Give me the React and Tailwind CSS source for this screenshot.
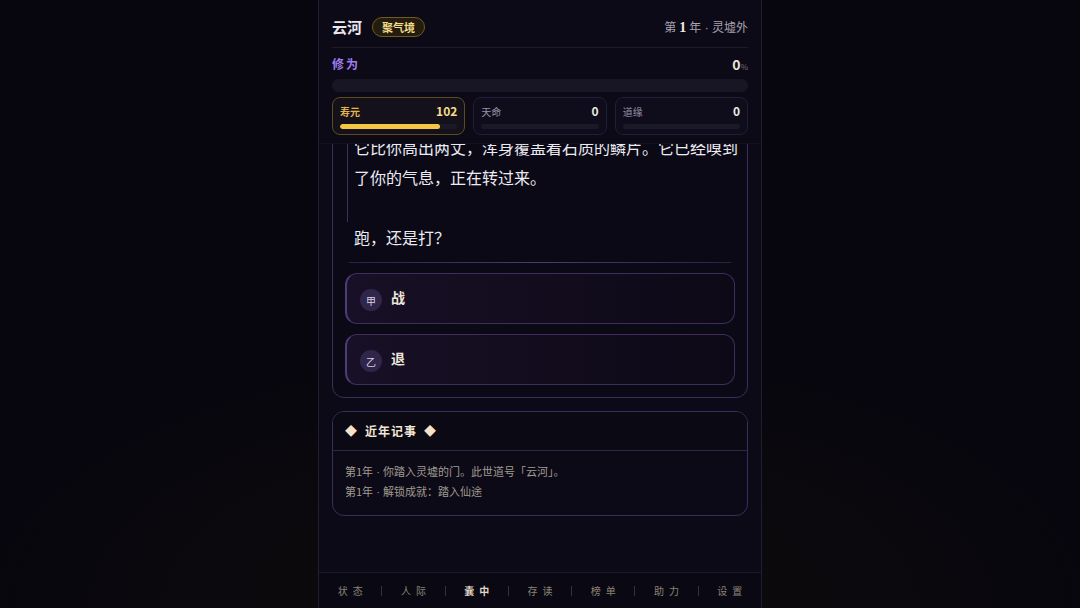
import React from 'react';

const font = { fontFamily: '"Noto Sans CJK SC", "Noto Sans", sans-serif' };
const latin = { fontFamily: '"Liberation Sans", sans-serif' };

function Dot() {
  return <span style={latin}> · </span>;
}

function StatCard({ label, value, pct, gold }) {
  return (
    <div
      className={
        'flex-1 h-[38px] rounded-lg border px-[7px] pt-[5px] ' +
        (gold ? 'border-[#5e4b1e] bg-[#15111a]' : 'border-[#221e36] bg-[#0f0d1c]')
      }
    >
      <div className="flex items-center justify-between h-[16px]">
        <span className={'text-[10px] ' + (gold ? 'text-[#e3b64a] font-bold' : 'text-[#9892a6]')}>{label}</span>
        <span className={'text-[12px] font-bold ' + (gold ? 'text-[#f6dc8e]' : 'text-[#ece8e0]')}>{value}</span>
      </div>
      <div className="mt-[5px] h-[5px] rounded-full bg-[#1b1828] overflow-hidden">
        <div className="h-full rounded-full bg-[#f4c645]" style={{ width: pct + '%' }} />
      </div>
    </div>
  );
}

function Choice({ mark, text }) {
  return (
    <div className="flex items-start gap-[9px] h-[51px] rounded-xl border border-[#3c2f5c] border-l-2 border-l-[#4e3b78] bg-gradient-to-r from-[#181026] to-[#0d0916] pl-[13px] pt-[13px]">
      <span className="mt-[2px] w-[22px] h-[22px] rounded-full bg-[#30264a] text-[#d8cfe8] text-[10px] flex items-center justify-center">
        {mark}
      </span>
      <span className="text-[14px] leading-[21px] font-bold text-[#ece6da]">{text}</span>
    </div>
  );
}

const tabs = ['状态', '人际', '囊中', '存读', '榜单', '助力', '设置'];

export default function App() {
  return (
    <div
      className="w-full h-screen bg-[#07060e] bg-[radial-gradient(ellipse_55%_45%_at_50%_100%,#0f0c0b,transparent)] flex justify-center overflow-hidden"
      style={font}
    >
      <div className="w-[444px] h-full flex flex-col bg-[#0c0a16] border-x border-[#211e2e]">
        {/* header */}
        <header className="h-[144px] px-[13px] pt-[12px] bg-[#0c0a16] relative z-10 border-b border-[#14111e]">
          <div className="flex items-center justify-between h-[30px]">
            <div className="flex items-center gap-[10px]">
              <span className="text-[15px] font-bold text-[#ebe7f0]">云河</span>
              <span className="h-[20px] px-[9px] rounded-full border border-[#6e5a24] bg-[#241c0c] text-[11px] font-bold text-[#f3dc8e] flex items-center">
                聚气境
              </span>
            </div>
            <div className="text-[12px] text-[#a7a2b2] flex items-baseline gap-[3px]">
              <span>第</span>
              <span className="text-[14px] font-bold text-[#f0ece4]" style={{ fontFamily: '"Liberation Serif", serif' }}>1</span>
              <span>
                年<Dot />灵墟外
              </span>
            </div>
          </div>
          <div className="mt-[5px] h-px bg-[#1d1a29]" />
          <div className="mt-[7px] flex items-center justify-between h-[18px]">
            <span className="text-[12px] font-bold tracking-[2px] text-[#a07cf0]">修为</span>
            <span className="text-[14px] font-bold text-[#e8e2d8]">
              0<span className="text-[8px] font-normal text-[#6c6778]">%</span>
            </span>
          </div>
          <div className="mt-[6px] h-[13px] rounded-full bg-[#181624]" />
          <div className="mt-[5px] flex gap-[8px]">
            <StatCard label="寿元" value="102" pct={85} gold />
            <StatCard label="天命" value="0" pct={0} />
            <StatCard label="道缘" value="0" pct={0} />
          </div>
        </header>

        {/* scrolled content */}
        <main className="flex-1 overflow-hidden">
          <div className="px-[13px] -mt-[27px]">
            <section className="rounded-xl border border-[#3b2e5c] bg-[#0b0916] pt-[14px] pb-[12px]">
              <div className="pl-[14px] pr-[6px] text-[16px] leading-[30px] text-[#ecebf2]">
                <p className="border-l border-[#3a3358] pl-[6px] pb-[30px]">
                  它比你高出两丈，浑身覆盖着石质的鳞片。它已经嗅到了你的气息，正在转过来。
                </p>
                <p className="pl-[7px]">跑，还是打？</p>
              </div>
              <div className="mx-[16px] mt-[10px] h-px bg-gradient-to-r from-[#2a2342] via-[#4a3b72] to-[#2a2342]" />
              <div className="px-[12px] mt-[10px] flex flex-col gap-[10px]">
                <Choice mark="甲" text="战" />
                <Choice mark="乙" text="退" />
              </div>
            </section>

            <section className="mt-[13px] rounded-xl border border-[#3b2e5c] bg-[#0d0a18] overflow-hidden">
              <div className="h-[39px] flex items-center gap-[7px] px-[12px] border-b border-[#2e2548] bg-[#0b0914] text-[12px] font-bold text-[#f0e6d6] tracking-[1px]">
                <span className="text-[#f6e2c8] text-[12px]">◆</span>
                <span>近年记事</span>
                <span className="text-[#f6e2c8] text-[12px]">◆</span>
              </div>
              <div className="px-[12px] pt-[10px] pb-[14px] text-[11px] text-[#a19b8f]">
                <div className="h-[20px] leading-[20px]">
                  第1年<Dot />你踏入灵墟的门。此世道号「云河」。
                </div>
                <div className="h-[20px] leading-[20px]">
                  第1年<Dot />解锁成就：踏入仙途
                </div>
              </div>
            </section>
          </div>
        </main>

        {/* bottom nav */}
        <nav className="h-[36px] flex items-center border-t border-[#1b1827] bg-[#0a0812]">
          {tabs.map((t, i) => (
            <React.Fragment key={t}>
              {i > 0 && <span className="w-px h-[10px] bg-[#34303f]" />}
              <span
                className={
                  'flex-1 text-center text-[10px] tracking-[5px] pl-[5px] ' +
                  (t === '囊中' ? 'text-[#e2d8c6] font-bold' : 'text-[#8a8376]')
                }
              >
                {t}
              </span>
            </React.Fragment>
          ))}
        </nav>
      </div>
    </div>
  );
}
